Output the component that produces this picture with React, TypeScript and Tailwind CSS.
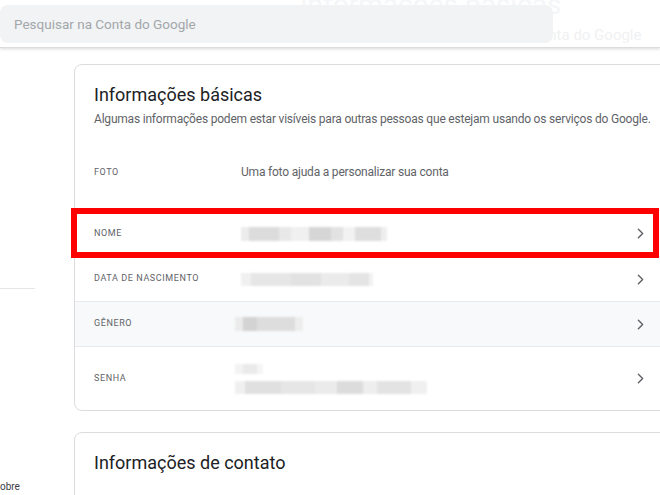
import { ChevronRight } from "lucide-react";

type Seg = { w: number; c: string };

// pixelated, blurred placeholder for hidden personal data
const Pixels = ({ segs, h }: { segs: Seg[]; h: number }) => (
  <div className="flex blur-[1px]" style={{ height: h }}>
    {segs.map((s, i) => (
      <div key={i} style={{ width: s.w, backgroundColor: s.c }} />
    ))}
  </div>
);

const Row = ({
  label,
  className = "",
  children,
  chevron = true,
}: {
  label: string;
  className?: string;
  children?: React.ReactNode;
  chevron?: boolean;
}) => (
  <div className={`flex items-center pl-[19px] ${className}`}>
    <div className="w-[147px] shrink-0 text-[9px] uppercase tracking-[0.6px] text-[#5f6368]">
      {label}
    </div>
    <div className="w-[391px] shrink-0">{children}</div>
    {chevron && <ChevronRight size={17} strokeWidth={2} className="text-[#5f6368]" />}
  </div>
);

const App = () => {
  return (
    <div className="relative h-[495px] w-[660px] overflow-hidden bg-white font-['Roboto','Liberation_Sans',sans-serif]">
      <header className="relative z-10 h-[48px] border-b border-[#dcdcdc] bg-white shadow-[0_1px_3px_rgba(60,64,67,0.2)]">
        <div className="absolute left-[300px] top-[-16px] whitespace-nowrap text-[28px] text-[#f5f6f7]">
          Informações básicas
        </div>
        <div className="absolute left-[530px] top-[24px] whitespace-nowrap text-[15px] text-[#f0f1f2]">
          Conta do Google
        </div>
        <div className="relative top-[5px] flex h-[38px] w-[553px] items-center rounded-lg bg-[#f1f3f4] pl-[14px] text-[13.5px] text-[#a3a7ab]">
          Pesquisar na Conta do Google
        </div>
      </header>

      <div className="flex">
        <aside className="w-[74px] shrink-0">
          <div className="mt-[240px] h-px w-[35px] bg-[#e6e6e6]" />
          <div className="ml-[-6px] mt-[192px] text-[10px] leading-[12px] text-[#3c4043]">Sobre</div>
        </aside>

        <main className="w-[620px] shrink-0 pt-[16px]">
          <section className="rounded-lg border border-[#dadce0]">
            <div className="px-[19px] pt-[18px]">
              <h1 className="text-[18px] leading-[24px] text-[#202124]">Informações básicas</h1>
              <p className="mt-[4px] whitespace-nowrap text-[12px] leading-[16px] tracking-[-0.2px] text-[#5f6368]">
                Algumas informações podem estar visíveis para outras pessoas que estejam usando os serviços do Google.
              </p>
            </div>

            <Row label="Foto" chevron={false} className="mt-[9px] h-[74px]">
              <span className="relative top-[-2px] text-[12px] tracking-[-0.2px] text-[#5f6368]">
                Uma foto ajuda a personalizar sua conta
              </span>
            </Row>
            <Row label="Nome" className="h-[46px] border-t border-[#e8eaed]">
              <Pixels
                h={14}
                segs={[
                  { w: 8, c: "#ececec" },
                  { w: 30, c: "#dcdcdc" },
                  { w: 12, c: "#e8e8e8" },
                  { w: 18, c: "#f0f0f0" },
                  { w: 22, c: "#d6d6d6" },
                  { w: 12, c: "#e2e2e2" },
                  { w: 12, c: "#f2f2f2" },
                  { w: 26, c: "#dedede" },
                  { w: 6, c: "#eeeeee" },
                ]}
              />
            </Row>
            <Row label="Data de nascimento" className="h-[45px] border-t border-[#e8eaed]">
              <Pixels
                h={13}
                segs={[
                  { w: 10, c: "#f0f0f0" },
                  { w: 40, c: "#e6e6e6" },
                  { w: 30, c: "#e2e2e2" },
                  { w: 28, c: "#ebebeb" },
                  { w: 20, c: "#e4e4e4" },
                  { w: 4, c: "#f2f2f2" },
                ]}
              />
            </Row>
            <Row label="Gênero" className="h-[45px] border-t border-[#e8eaed] bg-[#f8f9fa]">
              <div className="ml-[-6px]">
                <Pixels
                  h={14}
                  segs={[
                    { w: 8, c: "#ebebeb" },
                    { w: 14, c: "#d3d3d3" },
                    { w: 38, c: "#dddddd" },
                    { w: 8, c: "#ededed" },
                  ]}
                />
              </div>
            </Row>
            <Row label="Senha" className="h-[64px] rounded-b-lg border-t border-[#e8eaed]">
              <div className="ml-[-6px] flex flex-col gap-[7px]">
                <Pixels
                  h={10}
                  segs={[
                    { w: 8, c: "#f3f3f3" },
                    { w: 14, c: "#eaeaea" },
                    { w: 6, c: "#f5f5f5" },
                  ]}
                />
                <Pixels
                  h={13}
                  segs={[
                    { w: 10, c: "#f0f0f0" },
                    { w: 36, c: "#e0e0e0" },
                    { w: 34, c: "#e6e6e6" },
                    { w: 22, c: "#ebebeb" },
                    { w: 26, c: "#dcdcdc" },
                    { w: 14, c: "#eeeeee" },
                    { w: 34, c: "#e3e3e3" },
                    { w: 16, c: "#f0f0f0" },
                  ]}
                />
              </div>
            </Row>
          </section>

          <section className="mt-[21px] h-[100px] rounded-lg border border-[#dadce0] px-[19px] pt-[18px]">
            <h2 className="text-[18px] leading-[24px] text-[#202124]">Informações de contato</h2>
          </section>
        </main>
      </div>

      {/* red highlight around the NOME row */}
      <div className="absolute left-[71px] top-[208px] h-[50px] w-[588px] border-[6px] border-[#ff0000]" />
    </div>
  );
};

export default App;
